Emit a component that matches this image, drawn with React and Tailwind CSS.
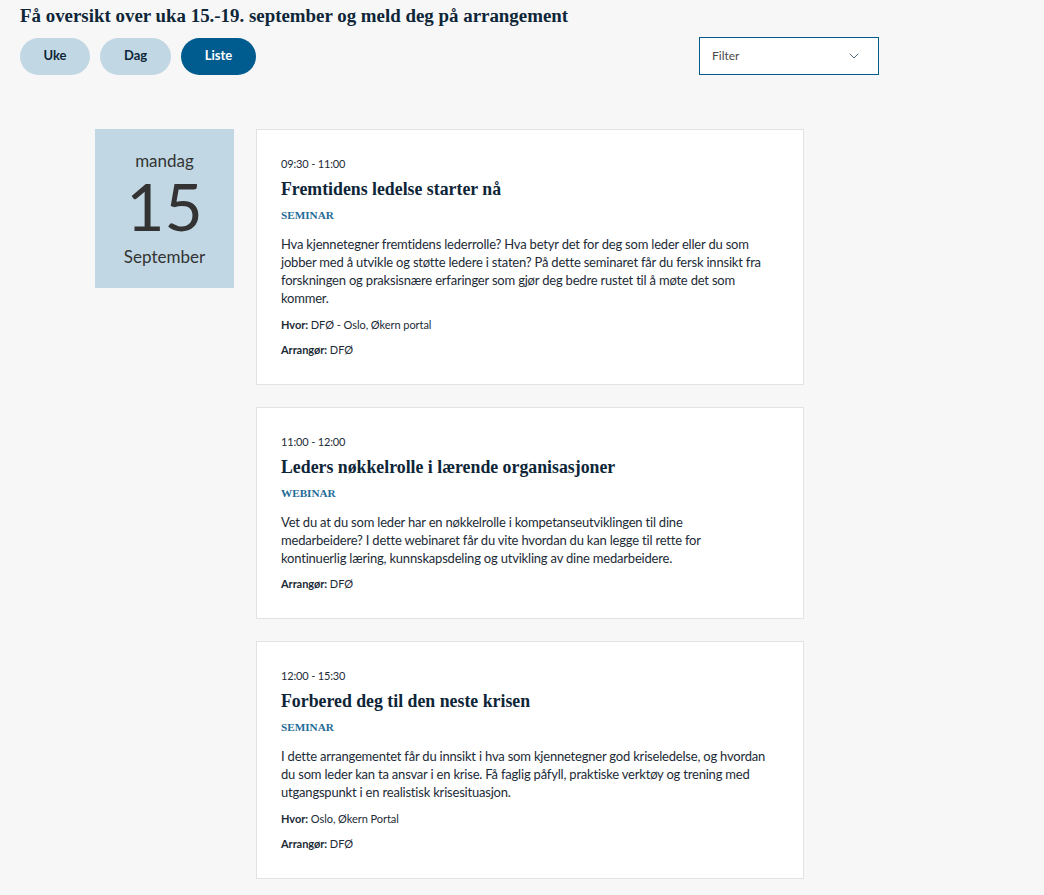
import React from 'react';
import { ChevronDown } from 'lucide-react';

const serif = { fontFamily: '"Liberation Serif", "DejaVu Serif", serif' };

const events = [
  {
    time: '09:30 - 11:00',
    title: 'Fremtidens ledelse starter nå',
    type: 'SEMINAR',
    text: 'Hva kjennetegner fremtidens lederrolle? Hva betyr det for deg som leder eller du som jobber med å utvikle og støtte ledere i staten? På dette seminaret får du fersk innsikt fra forskningen og praksisnære erfaringer som gjør deg bedre rustet til å møte det som kommer.',
    where: 'DFØ - Oslo, Økern portal',
    org: 'DFØ',
  },
  {
    time: '11:00 - 12:00',
    title: 'Leders nøkkelrolle i lærende organisasjoner',
    type: 'WEBINAR',
    text: 'Vet du at du som leder har en nøkkelrolle i kompetanseutviklingen til dine medarbeidere? I dette webinaret får du vite hvordan du kan legge til rette for kontinuerlig læring, kunnskapsdeling og utvikling av dine medarbeidere.',
    org: 'DFØ',
  },
  {
    time: '12:00 - 15:30',
    title: 'Forbered deg til den neste krisen',
    type: 'SEMINAR',
    text: 'I dette arrangementet får du innsikt i hva som kjennetegner god kriseledelse, og hvordan du som leder kan ta ansvar i en krise. Få faglig påfyll, praktiske verktøy og trening med utgangspunkt i en realistisk krisesituasjon.',
    where: 'Oslo, Økern Portal',
    org: 'DFØ',
  },
];

const EventCard = ({ ev }) => (
  <div className="bg-white border border-[#e3e3e3] pl-[24px] pr-[37px] pt-[26px] pb-[26px] text-[#1c2b36]">
    <div className="text-[11px] leading-[16px] tracking-[-0.15px]">{ev.time}</div>
    <h3 className="mt-[5px] text-[17.8px] leading-[24px] font-bold text-[#0e2638]" style={serif}>{ev.title}</h3>
    <div className="mt-[5px] text-[11.2px] leading-[18px] font-bold text-[#1f6c98]" style={serif}>{ev.type}</div>
    <p className="mt-[11px] text-[13px] leading-[18px] tracking-[-0.2px]">{ev.text}</p>
    {ev.where && (
      <div className="mt-[10px] text-[11px] leading-[16px] tracking-[-0.05px]">
        <span className="font-bold">Hvor:</span> {ev.where}
      </div>
    )}
    <div className="mt-[9px] text-[11px] leading-[16px] tracking-[-0.05px]">
      <span className="font-bold">Arrangør:</span> {ev.org}
    </div>
  </div>
);

const App = () => {
  return (
    <div className="min-h-[895px] bg-[#f7f7f7] px-5 pt-[5px] pb-5" style={{ fontFamily: '"Source Sans Pro", Lato, "Liberation Sans", sans-serif' }}>
      <h1 className="text-[18.9px] leading-[22px] font-bold text-[#0e2638]" style={serif}>
        Få oversikt over uka 15.-19. september og meld deg på arrangement
      </h1>
      <div className="mt-[10px] flex items-center">
        <div className="flex gap-[10px]">
          <button className="h-[37px] w-[70px] rounded-full bg-[#c1d8e4] text-[13px] font-bold text-[#0e2638]">Uke</button>
          <button className="h-[37px] w-[71px] rounded-full bg-[#c1d8e4] text-[13px] font-bold text-[#0e2638]">Dag</button>
          <button className="h-[37px] w-[75px] rounded-full bg-[#005b8f] text-[13px] font-bold text-white">Liste</button>
        </div>
        <div className="ml-[443px] flex h-[38px] w-[180px] items-center justify-between border-[1.5px] border-[#005b8f] bg-white pl-[12px] pr-[16px]">
          <span className="text-[12px] text-[#4a4a4a]">Filter</span>
          <ChevronDown size={16} strokeWidth={1.3} className="text-[#3a5366]" />
        </div>
      </div>
      <div className="mt-[54px] ml-[75px] flex items-start gap-[22px]">
        <div className="flex h-[159px] w-[139px] flex-col items-center bg-[#c1d8e4] pt-[22px] text-[#333]">
          <div className="text-[17px] leading-[20px]">mandag</div>
          <div className="mt-[6px] text-[66px] leading-[58px]">15</div>
          <div className="mt-[12px] text-[17px] leading-[20px]">September</div>
        </div>
        <div className="flex w-[548px] flex-col gap-[22px]">
          {events.map((ev, i) => (
            <EventCard key={i} ev={ev} />
          ))}
        </div>
      </div>
    </div>
  );
};

export default App;
